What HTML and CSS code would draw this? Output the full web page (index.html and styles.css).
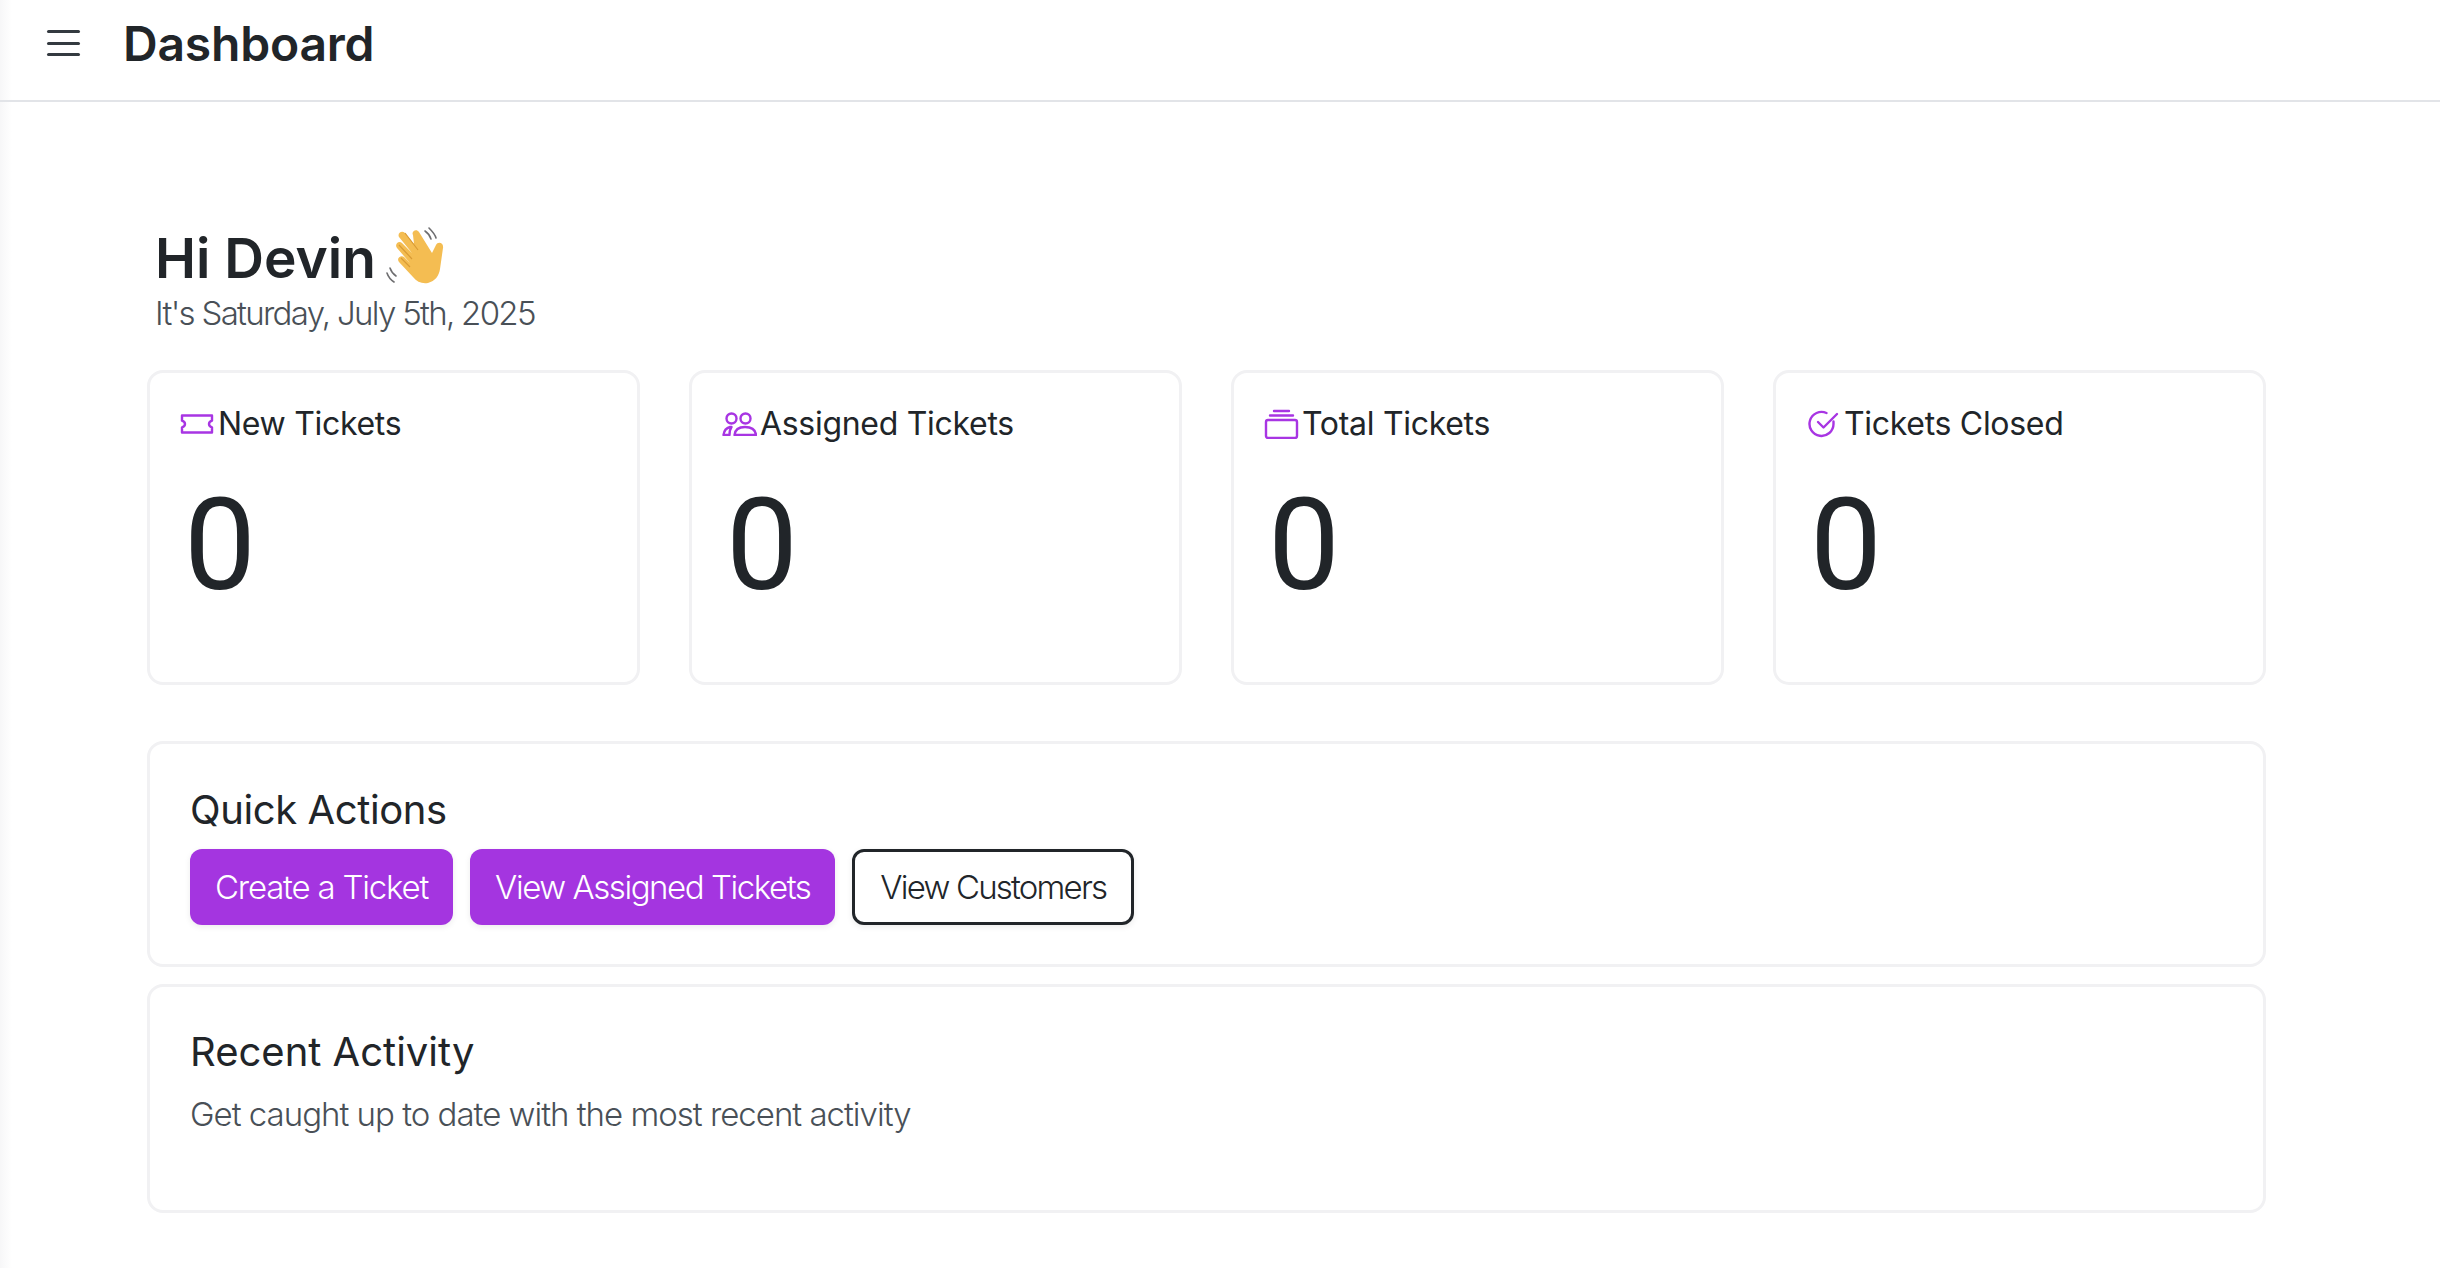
FILE: index.html
```html
<!DOCTYPE html>
<html lang="en">
<head>
<meta charset="utf-8">
<title>Dashboard</title>
<link rel="stylesheet" href="styles.css">
</head>
<body>
<div class="shell">
  <header class="topbar">
    <button class="burger" aria-label="Menu"><span></span><span></span><span></span></button>
    <h1 class="page-title">Dashboard</h1>
  </header>
  <main class="content">
    <section class="greeting">
      <h2 class="hello"><span>Hi Devin</span>
        <svg class="wave" viewBox="0 0 60 60" width="60" height="60" aria-hidden="true">
          <g fill="none" stroke="#6e6e70" stroke-width="1.6" stroke-linecap="round">
            <path d="M39 4c3 2 5 5 6 8"/><path d="M43 1c3 3 6 6 7 10"/>
            <path d="M4 41c1 3 3 6 6 8"/><path d="M1 46c1 3 4 7 7 9"/>
          </g>
          <path fill="#f4bd52" d="M13 10c-2-4 3-7 6-4l9 11-1-9c-2-3 3-7 6-3l13 21 4-8c2-4 8-2 7 3l-3 21c-1 7-5 12-12 14-6 1-11-1-15-6L13 35c-3-4 2-7 5-5l6 6-13-15c-3-4 2-8 5-5l10 10z"/>
          <path fill="none" stroke="#d99b35" stroke-width="1.2" d="M19 6l13 17M13 18l13 14M15 31l9 9"/>
        </svg>
      </h2>
      <p class="date">It's Saturday, July 5th, 2025</p>
    </section>

    <section class="stats">
      <article class="card stat">
        <div class="stat-head">
          <svg class="icon" viewBox="0 0 36 24" aria-hidden="true"><path d="M3 3.5h30v5.2c-2.2.7-3 2-3 3.300s.8 2.600 3 3.300v5.200H3v-5.200c2.200-.7 3-2 3-3.300s-.8-2.600-3-3.300z"/></svg>
          <span>New Tickets</span>
        </div>
        <div class="stat-value"><span class="zero">0</span></div>
      </article>
      <article class="card stat">
        <div class="stat-head">
          <svg class="icon" viewBox="0 0 36 24" aria-hidden="true"><circle cx="10.500" cy="6.500" r="5"/><circle cx="24.500" cy="6.500" r="5"/><path d="M2.500 23c.5-4 2.500-7 6.500-8l1.500 0c-1.500 2-2 5-2 8z"/><path d="M13.500 23c.5-5 4-8 10.500-8s10.500 3 11 8z"/></svg>
          <span>Assigned Tickets</span>
        </div>
        <div class="stat-value"><span class="zero">0</span></div>
      </article>
      <article class="card stat">
        <div class="stat-head">
          <svg class="icon" viewBox="0 0 36 30" aria-hidden="true"><rect x="3" y="11" width="31" height="18" rx="2"/><path d="M7 6.500h23M11 2h15"/></svg>
          <span>Total Tickets</span>
        </div>
        <div class="stat-value"><span class="zero">0</span></div>
      </article>
      <article class="card stat">
        <div class="stat-head">
          <svg class="icon" viewBox="0 0 36 28" aria-hidden="true"><path d="M28.500 11.500v2.500a12 12 0 1 1-7-11"/><path d="M13 12l5.500 5.500L32 4"/></svg>
          <span>Tickets Closed</span>
        </div>
        <div class="stat-value"><span class="zero">0</span></div>
      </article>
    </section>

    <section class="card panel actions">
      <h3 class="panel-title">Quick Actions</h3>
      <div class="btn-row">
        <button class="btn btn-solid">Create a Ticket</button>
        <button class="btn btn-solid btn-long">View Assigned Tickets</button>
        <button class="btn btn-outline">View Customers</button>
      </div>
    </section>

    <section class="card panel recent">
      <h3 class="panel-title panel-title-open">Recent Activity</h3>
      <p class="panel-sub">Get caught up to date with the most recent activity</p>
    </section>
  </main>
</div>
</body>
</html>
```

FILE: styles.css
```css
* { box-sizing: border-box; }
html, body { margin: 0; padding: 0; }
body {
  background: #fff;
  color: #212529;
  font-family: "Inter", "Liberation Sans", sans-serif;
  height: 1268px;
  overflow: hidden;
}
.shell {
  min-height: 1268px;
  background: linear-gradient(90deg, #f7f7f8 0, #ffffff 12px);
}
.topbar {
  display: flex;
  align-items: center;
  height: 102px;
  padding-left: 47px;
  padding-bottom: 14px;
  border-bottom: 2px solid #e2e4e8;
}
.burger {
  display: flex;
  flex-direction: column;
  justify-content: space-between;
  width: 33px;
  height: 26px;
  padding: 0;
  border: 0;
  background: none;
  margin-right: 43px;
}
.burger span {
  display: block;
  height: 3px;
  border-radius: 2px;
  background: #343a40;
}
.page-title {
  margin: 2px 0 0;
  font-size: 48px;
  line-height: 56px;
  font-weight: 600;
  letter-spacing: -0.2px;
}
.content {
  width: 2119px;
  margin-left: 147px;
}
.greeting {
  padding: 125px 0 0 8px;
}
.hello {
  display: flex;
  align-items: center;
  gap: 10px;
  margin: 0;
  font-size: 55px;
  line-height: 62px;
  font-weight: 600;
  height: 62px;
}
.wave {
  flex: none;
  margin-top: -2px;
}
.date {
  margin: 1px 0 0;
  font-size: 33px;
  line-height: 46px;
  font-weight: 300;
  letter-spacing: -1.7px;
  color: #495057;
}
.stats {
  display: grid;
  grid-template-columns: repeat(4, 493px);
  gap: 49px;
  margin-top: 34px;
}
.card {
  background: #fff;
  border: 3px solid #f1f1f3;
  border-radius: 16px;
}
.stat {
  height: 315px;
  padding: 30px 29px 0;
}
.stat-head {
  display: flex;
  align-items: center;
  gap: 3px;
  height: 42px;
  font-size: 32px;
  line-height: 42px;
  font-weight: 400;
  letter-spacing: -0.3px;
}
.icon {
  flex: none;
  width: 36px;
  height: auto;
  fill: none;
  stroke: #a835e3;
  stroke-width: 2.4;
  stroke-linecap: round;
  stroke-linejoin: round;
}
.stat-value {
  font-family: "Roboto", "Inter", sans-serif;
  font-weight: 400;
  font-size: 128px;
  line-height: 200px;
  padding-left: 5px;
}
.zero {
  display: inline-block;
  transform: scaleX(1);
  transform-origin: left center;
}
.panel {
  padding: 0 40px;
}
.actions {
  height: 226px;
  margin-top: 56px;
  padding-top: 40px;
}
.recent {
  height: 229px;
  margin-top: 17px;
  padding-top: 39px;
}
.panel-title {
  margin: 0;
  font-size: 40px;
  line-height: 52px;
  font-weight: 400;
  letter-spacing: -0.4px;
}
.panel-title-open {
  letter-spacing: 0;
}
.btn-row {
  display: flex;
  gap: 17px;
  margin-top: 13px;
}
.btn {
  height: 76px;
  padding: 0 25px;
  border-radius: 12px;
  font-family: inherit;
  font-size: 33px;
  font-weight: 300;
  letter-spacing: -1.2px;
  box-shadow: 0 2px 6px rgba(0, 0, 0, 0.08);
}
.btn-solid {
  background: #a435e0;
  border: 0;
  color: #fff;
}
.btn-long {
  letter-spacing: -1.45px;
}
.btn-outline {
  background: #fff;
  border: 3px solid #212529;
  color: #212529;
  letter-spacing: -1.8px;
}
.panel-sub {
  margin: 13px 0 0;
  font-size: 33px;
  line-height: 46px;
  font-weight: 300;
  letter-spacing: -1px;
  color: #495057;
}
```
